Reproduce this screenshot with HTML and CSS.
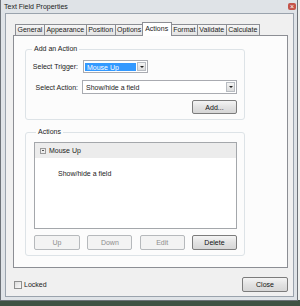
FILE: index.html
```html
<!DOCTYPE html>
<html lang="en">
<head>
    <meta charset="UTF-8">
    <title>Text Field Properties</title>
    <link rel="stylesheet" href="styles.css">
</head>
<body>
    <div class="window">
        <div class="titlebar">
            <span class="title">Text Field Properties</span>
            <span class="close-x">&#215;</span>
        </div>
        <div class="client">
            <div class="tabs">
                <span class="tab">General</span>
                <span class="tab">Appearance</span>
                <span class="tab">Position</span>
                <span class="tab">Options</span>
                <span class="tab active">Actions</span>
                <span class="tab">Format</span>
                <span class="tab">Validate</span>
                <span class="tab">Calculate</span>
            </div>
            <div class="panel">
                <fieldset class="group add-group">
                    <legend>Add an Action</legend>
                    <div class="form-grid">
                        <label>Select Trigger:</label>
                        <div class="select trigger">
                            <span class="select-value picked">Mouse Up</span>
                            <span class="select-arrow"></span>
                        </div>
                        <label>Select Action:</label>
                        <div class="select action">
                            <span class="select-value">Show/hide a field</span>
                            <span class="select-arrow"></span>
                        </div>
                    </div>
                    <div class="add-row">
                        <button class="btn">Add...</button>
                    </div>
                </fieldset>
                <fieldset class="group actions-group">
                    <legend>Actions</legend>
                    <div class="action-list">
                        <div class="list-head"><span class="collapse"></span>Mouse Up</div>
                        <div class="list-item">Show/hide a field</div>
                    </div>
                    <div class="btn-row">
                        <button class="btn" disabled>Up</button>
                        <button class="btn" disabled>Down</button>
                        <button class="btn" disabled>Edit</button>
                        <button class="btn">Delete</button>
                    </div>
                </fieldset>
            </div>
            <div class="footer">
                <label class="locked"><span class="checkbox"></span>Locked</label>
                <button class="btn">Close</button>
            </div>
        </div>
    </div>
</body>
</html>
```

FILE: styles.css
```css
body {
    margin: 0;
    width: 300px;
    height: 306px;
    overflow: hidden;
    font-family: "Liberation Sans", Arial, sans-serif;
    font-size: 7px;
    color: #222;
    background: linear-gradient(#eef0ee 0, #eef0ee 300px, #3f5243 300px);
}

.window {
    width: 298px;
    height: 301px;
    box-sizing: border-box;
    border: 1px solid #6d7278;
    border-top: none;
    background: #dfe3e7;
    padding: 0 3px 3px 4px;
    display: flex;
    flex-direction: column;
}

.titlebar {
    height: 13px;
    display: flex;
    align-items: center;
    justify-content: space-between;
}

.title {
    margin-left: -1px;
    color: #222;
}

.close-x {
    width: 8px;
    height: 7px;
    margin-right: -2px;
    margin-top: -1px;
    border-radius: 2px;
    background: #c4544a;
    color: #fff;
    font-size: 7px;
    line-height: 7px;
    text-align: center;
}

.client {
    flex: 1;
    background: #f0f0f0;
    border: 1px solid #9aa3ad;
    padding: 0 5px 0 7px;
    display: flex;
    flex-direction: column;
}

.tabs {
    display: flex;
    height: 14px;
    margin: 8px 0 -1px 2px;
}

.tab {
    height: 11px;
    margin-top: 2px;
    box-sizing: border-box;
    padding: 0 1.5px;
    border: 1px solid #8c8e94;
    border-bottom: none;
    margin-right: -1px;
    background: linear-gradient(#f6f6f6, #e3e3e3);
    line-height: 10px;
}

.tab.active {
    height: 14px;
    margin-top: 0;
    padding: 0 2.5px;
    margin-left: -1px;
    background: #fff;
    position: relative;
    z-index: 1;
    line-height: 12px;
}

.panel {
    height: 233px;
    box-sizing: border-box;
    border: 1px solid #8c8e94;
    background: #fcfcfc;
    padding: 9px 0 0 11px;
}

.group {
    width: 220px;
    box-sizing: border-box;
    margin: 0;
    border: 1px solid #dde3e7;
    border-radius: 3px;
    min-width: 0;
}

.group legend {
    padding: 0 2px;
    margin-left: 2px;
    line-height: 8px;
    color: #222;
}

.add-group {
    padding: 7px 7px 5px 4px;
}

.form-grid {
    display: grid;
    grid-template-columns: 48px 1fr;
    column-gap: 4px;
    row-gap: 7px;
    align-items: center;
}

.form-grid label {
    text-align: right;
}

.select {
    display: flex;
    box-sizing: border-box;
    border: 1px solid #a9abb1;
    background: #fff;
    padding: 1px;
}

.select.trigger {
    width: 65px;
    height: 13px;
    margin-left: 1px;
}

.select.action {
    height: 14px;
}

.select-value {
    flex: 1;
    padding-left: 2px;
    line-height: 9px;
    margin: 1px 1px 0 0;
}

.select-value.picked {
    background: #3399ff;
    color: #fff;
}

.select-arrow {
    width: 9px;
    box-sizing: border-box;
    border: 1px solid #b8bcc2;
    background: linear-gradient(#f4f4f4, #dcdcdc);
    display: flex;
    align-items: center;
    justify-content: center;
}

.select-arrow::after {
    content: "";
    border-left: 2px solid transparent;
    border-right: 2px solid transparent;
    border-top: 2px solid #222;
}

.add-row {
    display: flex;
    justify-content: flex-end;
    margin-top: 6px;
}

.btn {
    width: 45px;
    height: 14px;
    padding: 0;
    box-sizing: border-box;
    font-family: "Liberation Sans", Arial, sans-serif;
    font-size: 7px;
    color: #111;
    border: 1px solid #7c7c7c;
    border-radius: 2px;
    background: linear-gradient(#f4f4f4, #e2e2e2 50%, #d6d6d6);
}

.btn:disabled {
    color: #8d8d8d;
    border-color: #b6b9bc;
    background: #f3f3f3;
}

.actions-group {
    margin-top: 8px;
    padding: 6px 7px 5px 8px;
}

.action-list {
    height: 87px;
    box-sizing: border-box;
    border: 1px solid #a4a7ab;
    background: #fff;
}

.list-head {
    height: 15px;
    background: #ececec;
    display: flex;
    align-items: center;
    padding-left: 5px;
}

.collapse {
    width: 6px;
    height: 6px;
    box-sizing: border-box;
    border: 1px solid #9a9a9a;
    margin-right: 3px;
    display: flex;
    align-items: center;
    justify-content: center;
}

.collapse::after {
    content: "";
    width: 2px;
    height: 1px;
    background: #555;
}

.list-item {
    padding: 12px 0 0 23px;
    line-height: 8px;
}

.btn-row {
    display: flex;
    justify-content: space-between;
    margin-top: 6px;
}

.btn-row .btn {
    height: 15px;
}

.btn-row .btn:first-child {
    width: 46px;
}

.footer {
    display: flex;
    justify-content: space-between;
    align-items: center;
    margin-top: 9px;
}

.locked {
    display: flex;
    align-items: center;
    margin-left: 1px;
}

.checkbox {
    width: 8px;
    height: 8px;
    box-sizing: border-box;
    border: 1px solid #8e8f8f;
    background: linear-gradient(135deg, #dcdcdc, #fafafa);
    margin-right: 2px;
}

.footer .btn {
    width: 46px;
    height: 15px;
}
```
